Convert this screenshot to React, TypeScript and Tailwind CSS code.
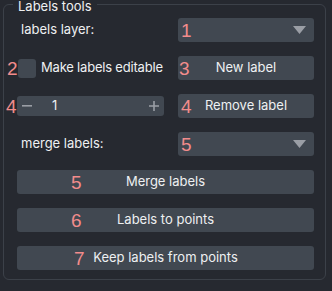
import { ReactNode } from "react";

const font = { fontFamily: "Inter, 'Liberation Sans', sans-serif" };

function Tag({ n, className }: { n: string; className: string }) {
  return (
    <span
      className={`absolute text-[19px] leading-none text-[#f28c8c] ${className}`}
      style={{ fontFamily: "'Liberation Sans', sans-serif" }}
    >
      {n}
    </span>
  );
}

function Combo({ tag }: { tag: string }) {
  return (
    <div className="relative h-6 rounded-[3px] bg-[#414851] flex items-center justify-end pr-2">
      <Tag n={tag} className="left-[3px] top-[3px]" />
      <svg width="13" height="8" viewBox="0 0 13 8">
        <path d="M0 0h13L6.5 8z" fill="#9a9ea5" />
      </svg>
    </div>
  );
}

function Button({ children, tag, tagLeft }: { children: ReactNode; tag: string; tagLeft: string }) {
  return (
    <div className="relative h-6 rounded-[3px] bg-[#414851] flex items-center justify-center text-[13px] text-[#eef0f2]">
      <Tag n={tag} className={`${tagLeft} top-[3px]`} />
      {children}
    </div>
  );
}

export default function App() {
  return (
    <div className="w-[332px] h-[291px] bg-[#262930] pl-[3px] pt-[4px]" style={font}>
      <div className="relative w-[323px] h-[276px] rounded-[6px] border border-[#3c4149] px-[13px] pt-[13px]">
        <span className="absolute left-[9px] -top-[5px] bg-[#262930] px-[5px] text-[13px] leading-[13px] text-[#eef0f2]">
          Labels tools
        </span>

        <div className="grid grid-cols-[147px_136px] gap-x-[14px] gap-y-[14px]">
          <div className="h-6 flex items-center pl-1 text-[13px] text-[#eef0f2]">labels layer:</div>
          <Combo tag="1" />

          <div className="relative h-6 flex items-center gap-[5px] pl-[1px] text-[13px] text-[#eef0f2] whitespace-nowrap">
            <Tag n="2" className="-left-[10px] top-[3px]" />
            <div className="w-[18px] h-[19px] shrink-0 rounded-[3px] bg-[#414851]" />
            <span className="tracking-[-0.2px]">Make labels editable</span>
          </div>
          <Button tag="3" tagLeft="left-[1px]">New label</Button>

          <div className="relative h-6 flex items-center">
            <Tag n="4" className="-left-[11px] top-[3px]" />
            <div className="w-full h-5 rounded-[3px] bg-[#414851] flex items-center text-[#eef0f2] text-[13px]">
              <svg width="10" height="2" viewBox="0 0 10 2" className="ml-[5px]">
                <rect width="10" height="1.6" fill="#9a9ea5" />
              </svg>
              <span className="ml-[20px]">1</span>
              <svg width="10" height="10" viewBox="0 0 10 10" className="ml-auto mr-[5px]">
                <path d="M0 5h10M5 0v10" stroke="#9a9ea5" strokeWidth="1.6" />
              </svg>
            </div>
          </div>
          <Button tag="4" tagLeft="left-[3px]">Remove label</Button>

          <div className="h-6 flex items-center pl-1 text-[13px] text-[#eef0f2]">merge labels:</div>
          <Combo tag="5" />

          <div className="col-span-2">
            <Button tag="5" tagLeft="left-[54px]">Merge labels</Button>
          </div>
          <div className="col-span-2">
            <Button tag="6" tagLeft="left-[54px]">Labels to points</Button>
          </div>
          <div className="col-span-2">
            <Button tag="7" tagLeft="left-[57px]">Keep labels from points</Button>
          </div>
        </div>
      </div>
    </div>
  );
}
